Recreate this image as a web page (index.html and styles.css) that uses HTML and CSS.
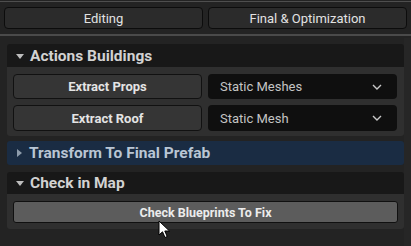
FILE: index.html
```html
<!DOCTYPE html>
<html lang="en">
<head>
    <meta charset="UTF-8">
    <meta name="viewport" content="width=device-width, initial-scale=1.0">
    <title>Building Tools</title>
    <link rel="stylesheet" href="styles.css">
</head>
<body>
    <div id="window">
        <!-- Mode tabs -->
        <div class="tabs">
            <button class="tab">Editing</button>
            <button class="tab">Final &amp; Optimization</button>
        </div>

        <div class="panel">
            <!-- Actions Buildings -->
            <div class="section">
                <div class="section-header">
                    <span class="arrow arrow-down"></span>
                    <span>Actions Buildings</span>
                </div>
                <div class="section-body">
                    <div class="row">
                        <button class="action">Extract Props</button>
                        <div class="combo">
                            <span>Static Meshes</span>
                            <svg width="10" height="6" viewBox="0 0 10 6"><path d="M1 1 L5 5 L9 1" fill="none" stroke="#c8c8c8" stroke-width="1.4"/></svg>
                        </div>
                    </div>
                    <div class="row">
                        <button class="action">Extract Roof</button>
                        <div class="combo">
                            <span>Static Mesh</span>
                            <svg width="10" height="6" viewBox="0 0 10 6"><path d="M1 1 L5 5 L9 1" fill="none" stroke="#c8c8c8" stroke-width="1.4"/></svg>
                        </div>
                    </div>
                </div>
            </div>

            <!-- Transform To Final Prefab (collapsed, hovered) -->
            <div class="section">
                <div class="section-header hovered">
                    <span class="arrow arrow-right"></span>
                    <span>Transform To Final Prefab</span>
                </div>
            </div>

            <!-- Check in Map -->
            <div class="section">
                <div class="section-header small">
                    <span class="arrow arrow-down"></span>
                    <span>Check in Map</span>
                </div>
                <div class="section-body check-body">
                    <button class="wide">Check Blueprints To Fix</button>
                </div>
            </div>
        </div>

        <div class="scroll-strip"></div>

        <svg class="cursor" width="13" height="19" viewBox="0 0 13 19">
            <path d="M1 1 L1 15 L4.5 11.8 L7 17.5 L9.2 16.5 L6.8 11 L11.5 11 Z" fill="#ffffff" stroke="#000000" stroke-width="1"/>
        </svg>
    </div>
</body>
</html>
```

FILE: styles.css
```css
body {
    margin: 0;
    background: #232323;
    font-family: Roboto, "Liberation Sans", sans-serif;
}

#window {
    position: relative;
    width: 411px;
    height: 246px;
    overflow: hidden;
    border-top: 1px solid #4e4e4e;
    margin-top: 1px;
    box-sizing: border-box;
}

.tabs {
    display: flex;
    gap: 5px;
    padding: 5px 4px 5px 4px;
    border-bottom: 2px solid #4a4a4a;
}

.tab {
    flex: 1;
    height: 22px;
    background: #2b2b2b;
    border: 1px solid #0c0c0c;
    border-radius: 4px;
    color: #e2e2e2;
    font-family: inherit;
    font-size: 13px;
    padding: 0;
}

.panel {
    display: flex;
    flex-direction: column;
    padding: 8px 7px 0 7px;
    width: 397px;
}

.section + .section {
    margin-top: 5px;
}

.section:last-child {
    margin-top: 7px;
}

.section-header {
    display: flex;
    align-items: center;
    gap: 6px;
    height: 23px;
    padding-left: 9px;
    background: #181818;
    border-radius: 3px 3px 0 0;
    color: #d2d2d2;
    font-size: 15.5px;
    font-weight: bold;
}

.section-header.hovered {
    height: 24px;
    background: #1a2c43;
    color: #b9c6d4;
    border-radius: 3px;
}

.section-header.small {
    height: 22px;
}

.arrow {
    width: 0;
    height: 0;
    border-style: solid;
}

.arrow-down {
    border-width: 5px 4px 0 4px;
    border-color: #bdbdbd transparent transparent transparent;
    margin-top: 1px;
}

.arrow-right {
    border-width: 4.5px 0 4.5px 5.5px;
    border-color: transparent transparent transparent #8e9cab;
    margin: 0 1px 0 1px;
}

.section-body {
    display: flex;
    flex-direction: column;
    gap: 6px;
    padding: 7px 7px 5px 6px;
    background: #2f2f2f;
    border-radius: 0 0 3px 3px;
}

.row {
    display: flex;
    gap: 6px;
}

.row + .row .action,
.row + .row .combo {
    height: 26px;
}

.action {
    width: 189px;
    height: 25px;
    background: #353535;
    border: 1px solid #111111;
    border-radius: 4px;
    color: #e4e4e4;
    font-family: inherit;
    font-size: 13px;
    font-weight: bold;
    padding: 0;
}

.combo {
    flex: 1;
    display: flex;
    align-items: center;
    justify-content: space-between;
    height: 25px;
    box-sizing: border-box;
    padding: 0 15px 0 12px;
    background: #0f0f0f;
    border-radius: 4px;
    color: #c4c4c4;
    font-size: 13px;
}

.check-body {
    padding: 7px 6px 6px 6px;
}

.wide {
    height: 22px;
    background: #5c5c5c;
    border: 1px solid #101010;
    border-radius: 3px;
    color: #ececec;
    font-family: inherit;
    font-size: 12.5px;
    font-weight: bold;
    padding: 0;
}

.scroll-strip {
    position: absolute;
    top: 36px;
    right: 0;
    width: 7px;
    height: 210px;
    background: #262626;
}

.cursor {
    position: absolute;
    left: 158px;
    top: 218px;
}
```
